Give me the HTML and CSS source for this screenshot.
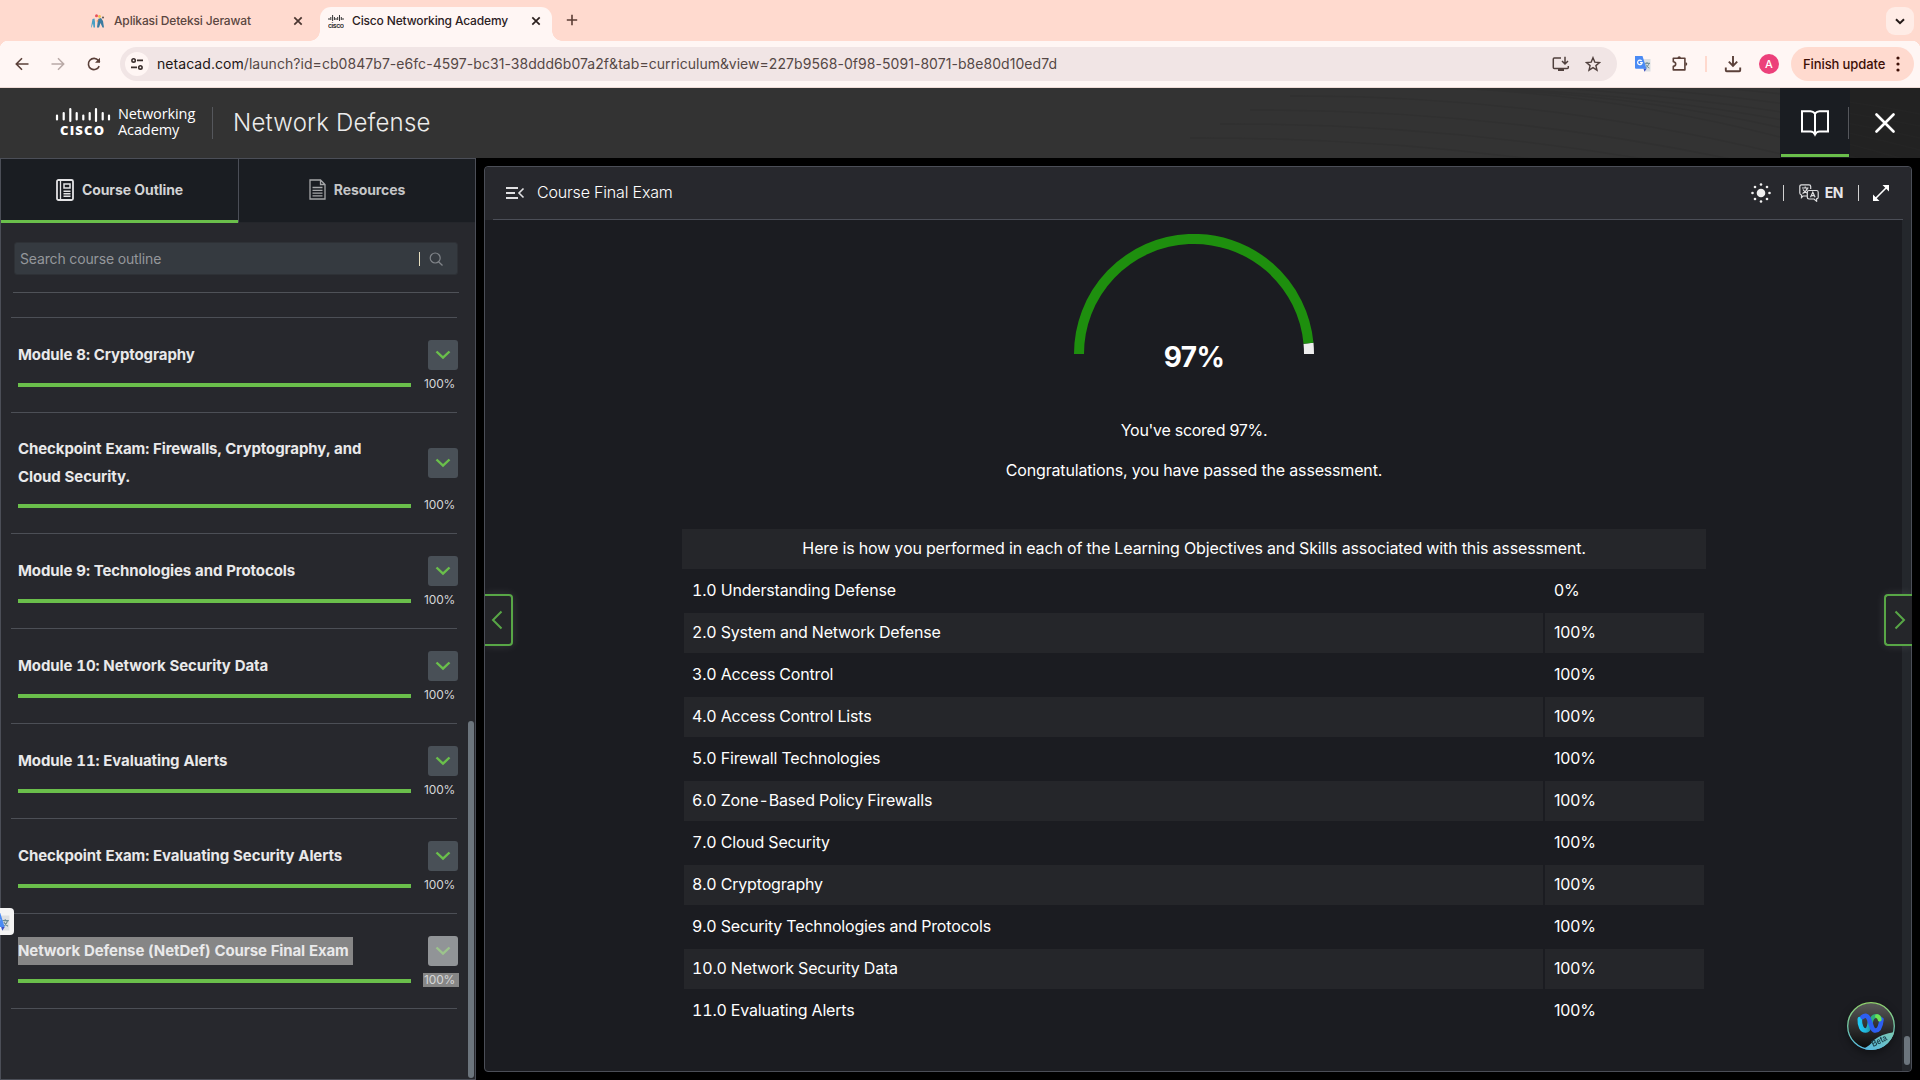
FILE: index.html
```
<!DOCTYPE html>
<html lang="en">
<head>
<meta charset="utf-8">
<title>Cisco Networking Academy</title>
<link rel="stylesheet" href="styles.css">
</head>
<body>
<svg width="0" height="0" class="defs">
  <symbol id="chev" viewBox="0 0 16 10"><path d="M1.500 1.500 8 7.700l6.500-6.200" fill="none" stroke="currentColor" stroke-width="2.400"/></symbol>
  <symbol id="x" viewBox="0 0 10 10"><path d="M1.300 1.300l7.400 7.400M8.700 1.300L1.300 8.700" fill="none" stroke="currentColor" stroke-width="1.700"/></symbol>
  <symbol id="gtr" viewBox="0 0 16 16">
    <path d="M6 3h9.500v12.500H9.500z" fill="#dcdfe2"/>
    <path d="M9.500 7.300h5.500M12 6v1.300M14 7.300c-.4 2-2 3.600-3.500 4.500M10.800 8.500c.8 1.500 1.800 2.800 3.500 3.500" fill="none" stroke="#6b8a93" stroke-width="1"/>
    <path d="M8.500 12.500h3.200L9.500 15.700z" fill="#3b4fc4"/>
    <path d="M0 0h7.500l4 12.700H1a1 1 0 0 1-1-1z" fill="#4a8af4"/>
    <path d="M6.700 4.900A2.300 2.300 0 1 0 7.200 6.700H5" fill="none" stroke="#fff" stroke-width="1.200"/>
  </symbol>
</svg>

<div class="tabstrip">
  <div class="tab tab-idle">
    <svg class="fav" width="14" height="14" viewBox="0 0 14 14"><circle cx="5.500" cy="1.700" r="1.500" fill="#e8505b"/><circle cx="8.500" cy="2.500" r="1.400" fill="#f0c04a"/><path d="M1.500 5l2-.5.5 3.500 0 5.500H2.500L2 9.500.5 13.500H0z" fill="#4a9fc4"/><path d="M7 5l3-1 2 3 1 6.500h-1.500l-2-4.500-1.500 4.500H6z" fill="#3c7ba0"/><path d="M3 5l2.500 2L8 5 6.500 8z" fill="#f0a060"/><circle cx="12" cy="3.500" r="1" fill="#555"/></svg>
    <span class="tab-title">Aplikasi Deteksi Jerawat</span>
    <svg class="tab-x" width="10" height="10"><use href="#x"/></svg>
  </div>
  <div class="tab tab-active">
    <svg class="fav" width="16" height="15" viewBox="0 0 16 15"><path d="M1 4v2M2.800 3v3M4.600 1v6M6.400 3v3M8 4v2M9.700 3v3M11.500 1v6M13.300 3v3M15 4v2" stroke="#333" stroke-width="1"/><text x="0" y="14" class="fav-txt" textLength="16">cisco</text></svg>
    <span class="tab-title title-b">Cisco Networking Academy</span>
    <svg class="tab-x" width="10" height="10"><use href="#x"/></svg>
  </div>
  <svg class="plus" width="12" height="12" viewBox="0 0 12 12"><path d="M6 .8v10.400M.8 6h10.400" stroke="#5b3c34" stroke-width="1.600"/></svg>
  <div class="tab-menu"><svg width="10" height="7" viewBox="0 0 10 7"><path d="M1 1.200l4 4 4-4" fill="none" stroke="#241a18" stroke-width="2"/></svg></div>
</div>

<div class="toolbar">
  <div class="nav-icons">
    <svg width="14" height="14" viewBox="0 0 14 14"><path d="M13.500 7H1.500M7 1.300L1.300 7 7 12.700" fill="none" stroke="#5b4039" stroke-width="1.600"/></svg>
    <svg width="14" height="14" viewBox="0 0 14 14"><path d="M.5 7h12M7 1.300L12.700 7 7 12.700" fill="none" stroke="#b9a9a6" stroke-width="1.500"/></svg>
    <svg width="14" height="14" viewBox="0 0 14 14"><path d="M12.200 9.100A5.600 5.600 0 1 1 11.400 3.500L12.800 5" fill="none" stroke="#5b4039" stroke-width="1.600"/><path d="M13 .8v5H8z" fill="#5b4039"/></svg>
  </div>
  <div class="omnibox">
    <div class="site-info"><svg width="14" height="14" viewBox="0 0 14 14"><g fill="none" stroke="#3a2f2d" stroke-width="1.600"><circle cx="3.600" cy="3.400" r="1.700"/><path d="M7 3.400h6M1 10.400h6"/><circle cx="10.400" cy="10.400" r="1.700"/></g></svg></div>
    <span class="url"><b>netacad.com</b>/launch?id=cb0847b7-e6fc-4597-bc31-38ddd6b07a2f&amp;tab=curriculum&amp;view=227b9568-0f98-5091-8071-b8e80d10ed7d</span>
    <svg class="install" width="18" height="16" viewBox="0 0 18 16"><g fill="none" stroke="#50403d" stroke-width="1.500"><path d="M9 2H2.300Q1.300 2 1.300 3v8.500q0 1 1 1h13q1 0 1-1V10M13 .8v7M10 5l3 3 3-3"/></g><path d="M6 12.500h6V15H6z" fill="#50403d"/></svg>
    <svg width="16" height="16" viewBox="0 0 16 16"><path d="M8 1.700l1.800 4.400 4.700.4-3.600 3.100 1.100 4.600L8 11.700l-4 2.500 1.100-4.600L1.500 6.500l4.700-.4z" fill="none" stroke="#50403d" stroke-width="1.400"/></svg>
  </div>
  <div class="ext">
    <svg width="16" height="16"><use href="#gtr"/></svg>
    <svg class="puzzle" width="18" height="18" viewBox="0 0 18 18"><path d="M2.300 3.300h11.600v11.600H2.300v-3.500q2.400-.2 2.400-2.300T2.300 6.800z" fill="none" stroke="#5b4039" stroke-width="1.600" stroke-linejoin="round"/><path d="M6.500 3a1.700 1.700 0 0 1 3.400 0zM14.500 7.300a1.800 1.800 0 0 1 0 3.600z" fill="#5b4039"/></svg>
    <i class="sep"></i>
    <svg class="dl" width="18" height="18" viewBox="0 0 18 18"><path d="M9 1v9.500M4.800 6.700L9 11l4.200-4.300M1.800 12.500v2.800q0 .9.900.9h12.600q.9 0 .9-.9v-2.800" fill="none" stroke="#5b4039" stroke-width="1.900"/></svg>
    <span class="avatar">A</span>
    <div class="update"><span>Finish update</span><svg width="4" height="16" viewBox="0 0 4 16" fill="#3d0f06"><circle cx="2" cy="2" r="1.600"/><circle cx="2" cy="8" r="1.600"/><circle cx="2" cy="14" r="1.600"/></svg></div>
  </div>
</div>

<header class="site-head">
  <svg class="waves" width="900" height="70" viewBox="0 0 900 70"><g fill="none" stroke="#2a2a2a" stroke-width="1.500"><path d="M330 0Q600 -10 900 90M400 0Q650 0 900 76M470 0Q700 10 900 62M540 0Q740 14 900 50M620 0Q780 14 900 38M700 0Q820 10 900 26M270 8Q580 6 900 104M230 22Q560 20 900 118M200 36Q540 34 900 132M170 50Q520 48 900 146"/></g></svg>
  <div class="logo">
    <div class="cisco">
      <svg width="56" height="16" viewBox="0 0 56 16"><path d="M2 8.500v4M8.700 6v6.500M15.300 2v12M21.700 6v6.500M28.300 8.500v4M34.700 6v6.500M41 2v12M47.700 6v6.500M54 8.500v4" stroke="#fff" stroke-width="2.200" stroke-linecap="round"/></svg>
      <b>CISCO</b>
    </div>
    <div class="academy">Networking<br>Academy</div>
  </div>
  <i class="head-sep"></i>
  <h1>Network Defense</h1>
  <div class="book"><svg width="30" height="28" viewBox="0 0 30 28"><path d="M15 4.500Q13 2.200 10.500 2.200H2V22.500h8.500Q13.500 22.500 15 25.500Q16.500 22.500 19.500 22.500H28V2.200H19.500Q17 2.200 15 4.500V25" fill="none" stroke="#fff" stroke-width="2"/></svg></div>
  <div class="close"><svg width="20" height="20" viewBox="0 0 20 20"><path d="M1.500 1.500l17 17M18.500 1.500l-17 17" stroke="#fff" stroke-width="2.600" stroke-linecap="round"/></svg></div>
</header>

<main>
  <aside>
    <div class="side-tabs">
      <div class="side-tab on"><svg width="18" height="22" viewBox="0 0 18 22"><g fill="none" stroke="#e4e4e6"><rect x="1" y="1" width="16" height="20" rx="1.500" stroke-width="1.800"/><path d="M4.500 1v20" stroke-width="1.300"/><rect x="8" y="5" width="6" height="4" stroke-width="1.500"/><path d="M7.500 12.300h7M7.500 14.800h7M7.500 17.200h7" stroke-width="1.400"/></g></svg>Course Outline</div>
      <div class="side-tab"><svg width="17" height="21" viewBox="0 0 17 21"><g fill="none" stroke="#a5a6a8" stroke-width="1.300"><path d="M1 1h10.500L16 5.500V20H1zM11.500 1v4.500H16M3.500 8.500h10M3.500 11.300h10M3.500 14.100h10M3.500 16.900h10"/></g></svg>Resources</div>
    </div>
    <div class="search"><span>Search course outline</span><i></i><svg width="14" height="14" viewBox="0 0 14 14"><circle cx="6.200" cy="6" r="5" fill="none" stroke="#808489" stroke-width="1.200"/><path d="M9.500 9.800l4 3.600" stroke="#808489" stroke-width="1.300"/></svg></div>
    <div class="list">
      <div class="item stub"></div>
      <div class="item"><div class="row"><span class="t">Module 8: Cryptography</span><span class="btn"><svg width="16" height="10"><use href="#chev"/></svg></span></div><div class="prog"><i></i><span>100%</span></div></div>
      <div class="item"><div class="row"><span class="t">Checkpoint Exam: Firewalls, Cryptography, and<br>Cloud Security.</span><span class="btn"><svg width="16" height="10"><use href="#chev"/></svg></span></div><div class="prog"><i></i><span>100%</span></div></div>
      <div class="item"><div class="row"><span class="t">Module 9: Technologies and Protocols</span><span class="btn"><svg width="16" height="10"><use href="#chev"/></svg></span></div><div class="prog"><i></i><span>100%</span></div></div>
      <div class="item"><div class="row"><span class="t">Module 10: Network Security Data</span><span class="btn"><svg width="16" height="10"><use href="#chev"/></svg></span></div><div class="prog"><i></i><span>100%</span></div></div>
      <div class="item"><div class="row"><span class="t">Module 11: Evaluating Alerts</span><span class="btn"><svg width="16" height="10"><use href="#chev"/></svg></span></div><div class="prog"><i></i><span>100%</span></div></div>
      <div class="item"><div class="row"><span class="t">Checkpoint Exam: Evaluating Security Alerts</span><span class="btn"><svg width="16" height="10"><use href="#chev"/></svg></span></div><div class="prog"><i></i><span>100%</span></div></div>
      <div class="item sel"><div class="row"><span class="t">Network Defense (NetDef) Course Final Exam</span><span class="btn"><svg width="16" height="10"><use href="#chev"/></svg></span></div><div class="prog"><i></i><span>100%</span></div></div>
    </div>
    <div class="side-thumb"></div>
    <div class="tr-pop"><svg width="19" height="19"><use href="#gtr"/></svg></div>
  </aside>

  <section class="panel">
    <div class="panel-head">
      <svg width="20" height="14" viewBox="0 0 20 14"><path d="M1 2h12M1 7h9M1 12h12" stroke="#e0e0e2" stroke-width="2"/><path d="M18.500 2.500L14 7l4.500 4.500" fill="none" stroke="#e0e0e2" stroke-width="1.600"/></svg>
      <h2>Course Final Exam</h2>
      <svg class="sun" width="20" height="20" viewBox="0 0 20 20" fill="#f0f0f0"><circle cx="10" cy="10" r="4.300"/><circle cx="10" cy="1.500" r="1.300"/><circle cx="10" cy="18.500" r="1.300"/><circle cx="1.500" cy="10" r="1.300"/><circle cx="18.500" cy="10" r="1.300"/><circle cx="4" cy="4" r="1.300"/><circle cx="16" cy="4" r="1.300"/><circle cx="4" cy="16" r="1.300"/><circle cx="16" cy="16" r="1.300"/></svg>
      <i class="bar"></i>
      <svg class="lang" width="20" height="18" viewBox="0 0 20 18"><g fill="none" stroke="#dedee0" stroke-width="1.200"><path d="M8 12H4l-1.500 1.500V11Q.8 10.500.8 9V2.500Q.8.8 2.500.8H10q1.700 0 1.700 1.700V5M3 4h6.500M6.200 2.500V4M8.500 4Q7.500 7.500 3.500 9.500M4 5.500Q5.500 8 8 9"/><path d="M10 6.500h7.500q1.700 0 1.700 1.700v5q0 1.500-1.600 1.700v2.300L15 15h-5q-1.700 0-1.700-1.700V8.200Q8.300 6.500 10 6.500zM11.500 13.300l2.300-5 2.300 5M12.300 11.700h3"/></g></svg>
      <span class="en">EN</span>
      <i class="bar bar2"></i>
      <svg width="18" height="18" viewBox="0 0 18 18"><path d="M3.500 14.500l11-11" stroke="#fff" stroke-width="1.600"/><path d="M17 1v6.500L10.500 1zM1 17v-6.500L7.500 17z" fill="#fff"/></svg>
    </div>
    <div class="panel-body">
      <div class="gauge">
        <svg width="240" height="120" viewBox="0 0 240 120"><path d="M234.500 109.200A115 115 0 0 1 235 120" fill="none" stroke="#eee" stroke-width="10"/><path d="M5 120A115 115 0 0 1 234.500 109.200" fill="none" stroke="#1e8f0e" stroke-width="10"/></svg>
        <b>97%</b>
      </div>
      <p class="scored">You've scored 97%.</p>
      <p class="congrats">Congratulations, you have passed the assessment.</p>
      <table>
        <caption>Here is how you performed in each of the Learning Objectives and Skills associated with this assessment.</caption>
        <tr><td>1.0 Understanding Defense</td><td>0%</td></tr>
        <tr><td>2.0 System and Network Defense</td><td>100%</td></tr>
        <tr><td>3.0 Access Control</td><td>100%</td></tr>
        <tr><td>4.0 Access Control Lists</td><td>100%</td></tr>
        <tr><td>5.0 Firewall Technologies</td><td>100%</td></tr>
        <tr><td>6.0 Zone-Based Policy Firewalls</td><td>100%</td></tr>
        <tr><td>7.0 Cloud Security</td><td>100%</td></tr>
        <tr><td>8.0 Cryptography</td><td>100%</td></tr>
        <tr><td>9.0 Security Technologies and Protocols</td><td>100%</td></tr>
        <tr><td>10.0 Network Security Data</td><td>100%</td></tr>
        <tr><td>11.0 Evaluating Alerts</td><td>100%</td></tr>
      </table>
    </div>
    <div class="track"><i></i></div>
    <div class="step prev"><svg width="12" height="20" viewBox="0 0 12 20"><path d="M10.500 1.500L2 10l8.500 8.500" fill="none" stroke="#58a646" stroke-width="2"/></svg></div>
    <div class="step next"><svg width="12" height="20" viewBox="0 0 12 20"><path d="M1.500 1.500L10 10l-8.500 8.500" fill="none" stroke="#58a646" stroke-width="2"/></svg></div>
    <svg class="assistant" width="48" height="48" viewBox="0 0 48 48">
      <defs>
        <linearGradient id="ring" x1="0" y1="0" x2="0" y2="1"><stop offset="0" stop-color="#8fd06a"/><stop offset="1" stop-color="#58bfe6"/></linearGradient>
        <linearGradient id="ball" x1="0" y1="0" x2="0" y2="1"><stop offset="0" stop-color="#5a5a5a"/><stop offset="1" stop-color="#080808"/></linearGradient>
        <linearGradient id="beta" x1="0" y1="1" x2="1" y2="0"><stop offset="0" stop-color="#55b8e2"/><stop offset="1" stop-color="#7cc8b0"/></linearGradient>
        <linearGradient id="wl" x1="0" y1="0" x2="1" y2="0"><stop offset="0" stop-color="#1fc8f5"/><stop offset=".6" stop-color="#22b4d8"/><stop offset="1" stop-color="#1d9aa8"/></linearGradient>
        <clipPath id="cb"><circle cx="24" cy="24" r="24"/></clipPath>
      </defs>
      <circle cx="24" cy="24" r="23.300" fill="url(#ball)" stroke="url(#ring)" stroke-width="1.300"/>
      <path d="M24 20Q25 14.500 28.500 14T34 18" fill="none" stroke="#2fae7a" stroke-width="4" stroke-linecap="round"/>
      <path d="M12.800 17C12.500 24 15 28.500 18.500 28.500S22.500 24 23 19.500" fill="none" stroke="url(#wl)" stroke-width="4.600" stroke-linecap="round"/>
      <path d="M15.500 15Q19 12 21.500 16C24 20.500 24.500 28.500 28.500 28.500S34 22 34.500 17.500" fill="none" stroke="#2d5ff2" stroke-width="4.600" stroke-linecap="round"/>
      <path d="M30 14.200Q32 14.500 32.700 17.500" fill="none" stroke="#6ce552" stroke-width="4" stroke-linecap="round"/>
      <g clip-path="url(#cb)"><path d="M16 47Q24 43 27 38Q34 32 48 30V48H16z" fill="url(#beta)"/><text x="26.300" y="45" transform="rotate(-26 26.300 45)" textLength="16" lengthAdjust="spacingAndGlyphs" class="beta">Beta</text></g>
    </svg>
  </section>
</main>
</body>
</html>
```
FILE: styles.css
```
* { box-sizing: border-box; }
body { margin: 0; width: 1920px; height: 1080px; overflow: hidden; background: #000; font-family: Inter, "Liberation Sans", sans-serif; display: flex; flex-direction: column; }
svg { display: block; flex: none; }
.defs { position: absolute; }

/* browser tabs */
.tabstrip { height: 41px; flex: none; background: #ffdacf; display: flex; align-items: flex-end; padding-left: 80px; }
.tab { height: 34px; display: flex; align-items: center; font-size: 12px; font-weight: 500; position: relative; padding-bottom: 6px; }
.tab-idle { width: 240px; padding-left: 11px; color: #5a4641; }
.tab-active { width: 232px; padding-left: 8px; color: #2b201e; background: #fff6f4; border-radius: 11px 11px 0 0; }
.tab-active::before, .tab-active::after { content: ""; position: absolute; bottom: 0; width: 10px; height: 10px; }
.tab-active::before { left: -10px; background: radial-gradient(circle at 0 0, transparent 9.5px, #fff6f4 10px); }
.tab-active::after { right: -10px; background: radial-gradient(circle at 100% 0, transparent 9.5px, #fff6f4 10px); }
.tab-title { margin: 0 0 1px 8px; flex: 1; white-space: nowrap; letter-spacing: -.15px; }
.tab-idle .tab-title { margin-left: 9px; letter-spacing: -.15px; }
.tab-x { color: #4a3530; margin-right: 17px; }
.tab-active .tab-x { margin-right: 11px; color: #2b201e; }
.fav-txt { font: 600 7px Inter, sans-serif; fill: #333; }
.plus { margin: 0 0 15px 14px; }
.tab-menu { margin: 0 6px 6px auto; width: 28px; height: 28px; border-radius: 9px; background: #ffece6; display: grid; place-items: center; }

/* browser toolbar */
.toolbar { height: 47px; flex: none; display: flex; align-items: center; padding: 0 6px 1px 15px; border-bottom: 1px solid #eedbd6; background: radial-gradient(circle at 8px 8px, #fff6f4 8px, #ffdacf 8.500px) 0 0/8px 8px no-repeat, radial-gradient(circle at 0 8px, #fff6f4 8px, #ffdacf 8.500px) 100% 0/8px 8px no-repeat, #fff6f4; }
.nav-icons { display: flex; gap: 22px; width: 105px; }
.omnibox { width: 1497px; height: 34px; border-radius: 17px; background: #f1e5e5; display: flex; align-items: center; padding: 0 16px 0 5px; }
.site-info { width: 24px; height: 24px; border-radius: 50%; background: #fff6f4; display: grid; place-items: center; margin-right: 8px; }
.url { flex: 1; font-size: 14px; letter-spacing: .054px; color: #554845; white-space: nowrap; }
.url b { font-weight: 400; color: #201615; }
.install { margin-right: 15px; }
.ext { display: flex; align-items: center; margin-left: 18px; flex: 1; }
.puzzle { margin-left: 20px; }
.sep { width: 2px; height: 16px; background: #ffd9ce; margin-left: 16px; }
.dl { margin-left: 17px; }
.avatar { width: 20px; height: 20px; border-radius: 50%; background: #ec407a; color: #fff; font-size: 11px; font-weight: 500; display: grid; place-items: center; margin-left: 17px; }
.update { margin-left: auto; width: 123px; height: 34px; border-radius: 17px; background: #ffdacf; color: #3d0f06; font-size: 13px; font-weight: 500; letter-spacing: -.1px; display: flex; align-items: center; justify-content: space-between; padding: 0 14px 0 12px; white-space: nowrap; }

/* course header */
.site-head { height: 70px; flex: none; background: linear-gradient(90deg, #333 0, #333 1850px, #222 1850px); display: flex; align-items: center; position: relative; color: #fff; }
.waves { position: absolute; right: 0; top: 0; opacity: .3; }
.logo { display: flex; margin-left: 55px; width: 157px; align-items: center; }
.cisco { width: 63px; display: flex; flex-direction: column; height: 32px; }
.cisco b { font: 800 13px/14px "Open Sans", sans-serif; letter-spacing: 1.2px; margin: 0 0 0 5px; }
.academy { font: 400 14.5px/16px "Open Sans", sans-serif; letter-spacing: -.1px; white-space: nowrap; padding-bottom: 2px; }
.head-sep { width: 1px; height: 32px; background: #55575c; }
h1 { margin: 0 0 2px 20px; font-size: 24px; font-weight: 300; letter-spacing: .2px; color: #ececec; }
.book { margin-left: auto; width: 70px; height: 70px; background: #1a1d22; display: grid; place-items: center; position: relative; border: solid #1a1d22; border-width: 0 1px; }
.book::before { content: ""; position: absolute; left: 0; right: 0; bottom: 1px; height: 3px; background: #6abf4b; }
.book::after { content: ""; position: absolute; right: 0; top: 19px; height: 32px; width: 1px; background: #55575c; }
.close { width: 70px; display: grid; place-items: center; position: relative; }

main { flex: 1; display: flex; min-height: 0; }

/* course outline */
aside { width: 476px; background: #27282d; border: 1px solid #4b4e57; position: relative; display: flex; flex-direction: column; }
.side-tabs { display: flex; height: 64px; flex: none; }
.side-tab { flex: 1; background: #1a1d22; display: flex; align-items: center; justify-content: center; gap: 8px; font-size: 14px; font-weight: 700; color: #c4c5c7; letter-spacing: -.07px; border-bottom: 1px solid #24262b; padding: 0 0 2px; }
.side-tab.on { flex: none; width: 238px; border-right: 1px solid #4b4e57; color: #d2d3d5; position: relative; }
.side-tab.on::after { content: ""; position: absolute; left: 0; right: 0; bottom: -1px; height: 3px; background: #6abf4b; }
.search { margin: 19px 17px 0 13px; height: 33px; flex: none; border-radius: 3px; background: #353a40; border: 1px solid #2e3136; display: flex; align-items: center; padding: 0 14px 0 5px; font-size: 14px; letter-spacing: -.15px; color: #94979b; }
.search span { flex: 1; }
.search i { width: 1px; height: 14px; background: #e8e0c0; margin-right: 9px; }
.list { margin: 17px 0 0; padding: 0 18px 0 10px; position: relative; }
.list::before { content: ""; position: absolute; left: 12px; top: 0; width: 446px; height: 1px; background: #4f5258; }
.item { border-bottom: 1px solid #4c4f56; padding: 22px 0 12px 7px; }
.stub { height: 26px; padding: 0; }
.row { display: flex; align-items: center; justify-content: space-between; min-height: 30px; margin-right: -1px; }
.t { font-size: 15px; line-height: 28px; font-weight: 700; letter-spacing: -.1px; font-variant-numeric: tabular-nums; color: #e9e9ea; white-space: nowrap; }
.btn { width: 30px; height: 30px; border-radius: 3px; background: #495057; color: #6abf4b; display: grid; place-items: center; }
.prog { height: 30px; display: flex; align-items: center; margin-right: -3px; }
.prog i { width: 393px; flex: none; height: 4px; background: #6abf4b; }
.prog span { margin: -2px 0 0 12px; padding: 0 3px 0 1px; font-size: 12px; line-height: 14px; letter-spacing: -.15px; color: #d5d6d8; }
.sel .t { background: #868686; padding-right: 4px; letter-spacing: -.12px; }
.sel .btn { background: #919497; color: #9cc48c; }
.sel .prog span { background: #868686; padding-right: 4px; }
.side-thumb { position: absolute; right: 1px; top: 562px; width: 6px; height: 357px; border-radius: 3px; background: #6c757d; }
.tr-pop { position: absolute; left: -14px; top: 749px; width: 27px; height: 27px; border-radius: 4px; background: #f4f4f4; display: grid; place-items: center; }

/* exam panel */
.panel { margin: 8px; flex: 1; border: 1px solid #4b4e57; border-radius: 4px; background: #1b1c21; position: relative; }
.panel-head { height: 53px; background: #27282d; border-radius: 4px 4px 0 0; display: flex; align-items: center; padding: 0 21px 1px 20px; position: relative; }
.panel-head::after { content: ""; position: absolute; left: 8px; right: 8px; bottom: 0; height: 1px; background: #4b4e57; }
h2 { margin: 0 auto 2px 12px; font-size: 16px; font-weight: 300; letter-spacing: -.18px; color: #fff; }
.bar { width: 1px; height: 16px; background: #d0d0d0; margin: 0 15px 0 12px; }
.lang { margin-right: 6px; }
.en { font-size: 14px; font-weight: 700; letter-spacing: -.5px; color: #e6e6e8; margin-bottom: 1px; }
.bar2 { margin: 0 13px 0 15px; }
.panel-body { width: 1418px; padding-top: 14px; color: #fff; font-size: 16px; line-height: 24px; letter-spacing: -.17px; text-align: center; display: flex; flex-direction: column; align-items: center; }
.gauge { position: relative; width: 240px; height: 120px; }
.gauge b { position: absolute; left: 0; right: 0; top: 106px; font-size: 28px; line-height: 34px; letter-spacing: -.7px; }
p { margin: 0; }
.scored { margin-top: 64px; letter-spacing: -.28px; }
.congrats { margin-top: 16px; }
table { width: 1024px; margin-top: 47px; border-spacing: 2px; table-layout: fixed; text-align: left; letter-spacing: -.17px; font-variant-numeric: tabular-nums; }
caption { height: 40px; line-height: 38px; background: #25262a; letter-spacing: -.115px; }
td { height: 40px; padding: 0 0 2px 8px; }
td:last-child { width: 159px; padding-left: 9px; letter-spacing: -.15px; font-variant-numeric: normal; }
tr:nth-child(even) td { background: #25262a; }
.track { position: absolute; right: 0; top: 53px; bottom: 0; width: 9px; background: #24272c; border-radius: 0 0 4px 0; }
.track i { position: absolute; left: 2px; bottom: 6px; width: 6px; height: 29px; border-radius: 3px; background: #6c757d; }
.step { position: absolute; top: 427px; width: 28px; height: 52px; border: 2px solid #58a646; background: #25262a; display: grid; place-items: center; box-shadow: 0 0 10px rgba(255,255,255,.12); }
.prev { left: 0; border-left: 0; border-radius: 0 4px 4px 0; padding-right: 2px; clip-path: inset(-12px -12px -12px 0); }
.next { right: -1px; border-right: 0; border-radius: 4px 0 0 4px; padding-left: 1px; clip-path: inset(-12px 0 -12px -12px); }
.assistant { position: absolute; right: 16px; bottom: 21px; filter: drop-shadow(0 3px 4px rgba(0,0,0,.4)); }
.beta { font: 700 9px "Liberation Sans", sans-serif; fill: #1d4652; }
```
